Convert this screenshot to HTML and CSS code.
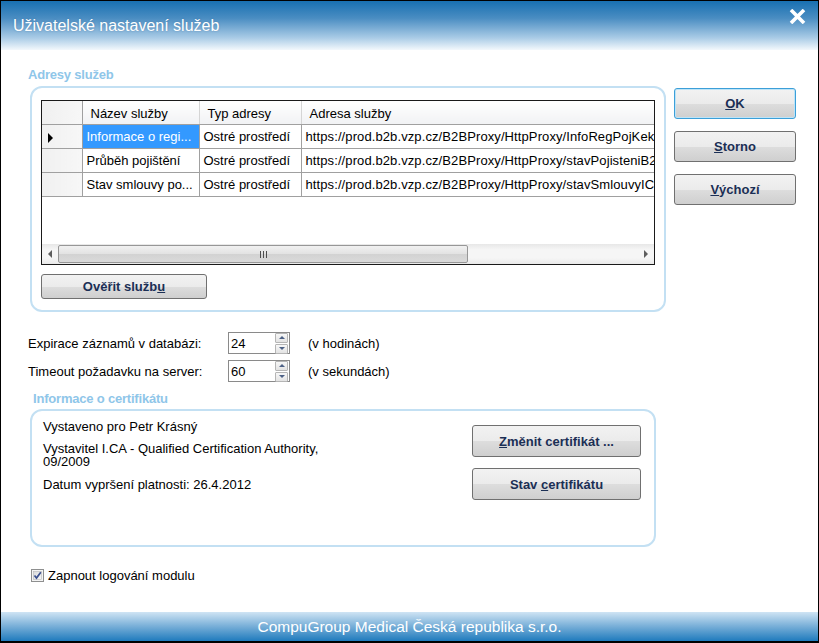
FILE: index.html
```html
<!DOCTYPE html>
<html lang="cs">
<head>
    <meta charset="UTF-8">
    <title>Uživatelské nastavení služeb</title>
    <link rel="stylesheet" href="styles.css">
</head>
<body>
    <div class="window">
        <div class="titlebar">
            <div class="title">Uživatelské nastavení služeb</div>
            <svg class="close" width="17" height="15" viewBox="0 0 17 15">
                <path d="M2 1 L15 14 M15 1 L2 14" stroke="#fff" stroke-width="3.6"/>
            </svg>
        </div>

        <div class="main">
            <div class="left">
                <div class="group-label">Adresy služeb</div>
                <div class="group group-services">
                    <div class="grid">
                        <table class="grid-table">
                            <colgroup>
                                <col style="width:40px">
                                <col style="width:117px">
                                <col style="width:102px">
                                <col>
                            </colgroup>
                            <thead>
                                <tr>
                                    <th class="rowhead"></th>
                                    <th>Název služby</th>
                                    <th>Typ adresy</th>
                                    <th>Adresa služby</th>
                                </tr>
                            </thead>
                            <tbody>
                                <tr>
                                    <td class="rowhead"><span class="current"></span></td>
                                    <td class="selected">Informace o regi...</td>
                                    <td>Ostré prostředí</td>
                                    <td class="url">https://prod.b2b.vzp.cz/B2BProxy/HttpProxy/InfoRegPojKek</td>
                                </tr>
                                <tr>
                                    <td class="rowhead"></td>
                                    <td>Průběh pojištění</td>
                                    <td>Ostré prostředí</td>
                                    <td class="url">https://prod.b2b.vzp.cz/B2BProxy/HttpProxy/stavPojisteniB2</td>
                                </tr>
                                <tr>
                                    <td class="rowhead"></td>
                                    <td>Stav smlouvy po...</td>
                                    <td>Ostré prostředí</td>
                                    <td class="url">https://prod.b2b.vzp.cz/B2BProxy/HttpProxy/stavSmlouvyIC</td>
                                </tr>
                            </tbody>
                        </table>
                        <div class="grid-fill"></div>
                        <div class="hscroll">
                            <div class="arrow arrow-left"></div>
                            <div class="thumb"><span class="grip"></span></div>
                            <div class="track"></div>
                            <div class="arrow arrow-right"></div>
                        </div>
                    </div>
                    <button class="btn btn-verify">Ověřit služb<u>u</u></button>
                </div>

                <div class="field-row first">
                    <div class="field-label">Expirace záznamů v databázi:</div>
                    <div class="spin">
                        <span class="spin-value">24</span>
                        <div class="spin-buttons">
                            <div class="spin-btn"><span class="tri-up"></span></div>
                            <div class="spin-btn"><span class="tri-down"></span></div>
                        </div>
                    </div>
                    <div class="field-unit">(v hodinách)</div>
                </div>
                <div class="field-row">
                    <div class="field-label">Timeout požadavku na server:</div>
                    <div class="spin">
                        <span class="spin-value">60</span>
                        <div class="spin-buttons">
                            <div class="spin-btn"><span class="tri-up"></span></div>
                            <div class="spin-btn"><span class="tri-down"></span></div>
                        </div>
                    </div>
                    <div class="field-unit">(v sekundách)</div>
                </div>

                <div class="group-label cert-label">Informace o certifikátu</div>
                <div class="group group-cert">
                    <div class="cert-info">
                        <p>Vystaveno pro Petr Krásný</p>
                        <p>Vystavitel I.CA - Qualified Certification Authority, 09/2009</p>
                        <p>Datum vypršení platnosti: 26.4.2012</p>
                    </div>
                    <div class="cert-buttons">
                        <button class="btn btn-cert"><u>Z</u>měnit certifikát ...</button>
                        <button class="btn btn-cert">Stav <u>c</u>ertifikátu</button>
                    </div>
                </div>

                <label class="check-row">
                    <svg class="checkbox" width="13" height="13" viewBox="0 0 13 13">
                        <defs>
                            <linearGradient id="cbg" x1="0" y1="0" x2="1" y2="1">
                                <stop offset="0" stop-color="#d9dadb"/>
                                <stop offset="1" stop-color="#f7f7f7"/>
                            </linearGradient>
                        </defs>
                        <rect x="0.5" y="0.5" width="12" height="12" fill="#f4f4f4" stroke="#8e8f8f"/>
                        <rect x="2.5" y="2.5" width="8" height="8" fill="url(#cbg)" stroke="#b7b8b9" stroke-width="0.6"/>
                        <path d="M3.5 6.5 L5.5 9 L9.8 3.2" fill="none" stroke="#3a4f8e" stroke-width="1.7"/>
                    </svg>
                    <span>Zapnout logování modulu</span>
                </label>
            </div>

            <div class="right">
                <button class="btn btn-side btn-default"><u>O</u>K</button>
                <button class="btn btn-side"><u>S</u>torno</button>
                <button class="btn btn-side"><u>V</u>ýchozí</button>
            </div>
        </div>

        <div class="footer">CompuGroup Medical Česká republika s.r.o.</div>
    </div>
</body>
</html>
```

FILE: styles.css
```css
body {
    margin: 0;
    font-family: "Liberation Sans", Arial, sans-serif;
    font-size: 13px;
    color: #000;
    background: #fff;
}
.window {
    width: 819px;
    height: 643px;
    box-sizing: border-box;
    border: 1px solid #000;
    border-bottom-width: 2px;
    display: flex;
    flex-direction: column;
    background: #fff;
}
.titlebar {
    height: 49px;
    flex: none;
    display: flex;
    justify-content: space-between;
    align-items: flex-start;
    padding: 0 12px 0 12px;
    background: linear-gradient(to bottom, #1870b1 0%, #4a8dc2 35%, #a9cbe6 75%, #f3f8fc 100%);
}
.title {
    margin-top: 16px;
    font-size: 16px;
    line-height: 18px;
    color: #fff;
    text-shadow: 0 0 2px rgba(30, 80, 130, 0.4);
}
.close {
    margin-top: 8px;
}
.main {
    flex: 1;
    display: flex;
    padding-left: 27px;
}
.left {
    width: 638px;
    display: flex;
    flex-direction: column;
}
.right {
    width: 122px;
    margin-left: 8px;
    padding-top: 38px;
    display: flex;
    flex-direction: column;
    gap: 12px;
}
.group-label {
    margin-top: 17px;
    height: 16px;
    line-height: 16px;
    font-weight: bold;
    font-size: 13px;
    color: #8fc6e9;
    letter-spacing: -0.2px;
}
.group {
    margin-left: 2px;
    box-sizing: border-box;
    border: 2px solid #c3e0f3;
    border-radius: 12px;
}
.group-services {
    margin-top: 3px;
    width: 636px;
    height: 226px;
    padding: 12px 9px 0 9px;
}
.grid {
    height: 165px;
    box-sizing: border-box;
    border: 1px solid #1a1a1a;
    display: flex;
    flex-direction: column;
    background: #fff;
    overflow: hidden;
}
.grid-table {
    width: 100%;
    table-layout: fixed;
    border-collapse: collapse;
}
.grid-table th,
.grid-table td {
    white-space: nowrap;
    overflow: hidden;
    padding: 0 0 0 4px;
    text-align: left;
    font-weight: normal;
}
.grid-table th {
    height: 22px;
    padding-left: 8px;
    padding-top: 1px;
    background: linear-gradient(to bottom, #ffffff, #f1f2f4);
    border-right: 1px solid #d5d5d5;
    border-bottom: 1px solid #a0a0a0;
}
.grid-table td {
    height: 23px;
    border: 1px solid #a0a0a0;
    border-top: none;
}
.grid-table tr > :last-child {
    border-right: none;
}
.grid-table td.url {
    letter-spacing: 0.1px;
}
.grid-table .rowhead {
    background: linear-gradient(to right, #f0f0f0, #f7f7f7);
    border-left: none;
    padding-left: 6px;
}
.grid-table th.rowhead {
    border-right: 1px solid #a0a0a0;
}
.current {
    display: inline-block;
    width: 0;
    height: 0;
    border-top: 5px solid transparent;
    border-bottom: 5px solid transparent;
    border-left: 5px solid #000;
    vertical-align: middle;
}
.grid-table td.selected {
    background: #3399ff;
    color: #fff;
}
.grid-fill {
    flex: 1;
}
.hscroll {
    height: 20px;
    display: flex;
    align-items: center;
    background: linear-gradient(to bottom, #e7e7e7, #f6f6f6 30%, #f6f6f6 70%, #e9e9e9);
}
.arrow {
    width: 16px;
    height: 20px;
    display: flex;
    align-items: center;
    justify-content: center;
}
.arrow::before {
    content: "";
    border-top: 4px solid transparent;
    border-bottom: 4px solid transparent;
}
.arrow-left::before {
    border-right: 4px solid #5e5e5e;
}
.arrow-right::before {
    border-left: 4px solid #5e5e5e;
}
.thumb {
    width: 410px;
    height: 18px;
    box-sizing: border-box;
    border: 1px solid #979797;
    border-radius: 2px;
    background: linear-gradient(to bottom, #f1f1f1, #e2e2e2 50%, #d2d2d2 51%, #dadada);
    display: flex;
    align-items: center;
    justify-content: center;
}
.grip {
    width: 7px;
    height: 7px;
    background: repeating-linear-gradient(to right, #4e4e4e 0, #4e4e4e 1px, transparent 1px, transparent 3px);
}
.track {
    flex: 1;
}
.btn {
    font-family: "Liberation Sans", Arial, sans-serif;
    font-weight: bold;
    font-size: 13px;
    color: #1b2f55;
    box-sizing: border-box;
    border: 1px solid #707070;
    border-radius: 3px;
    background: linear-gradient(to bottom, #f2f2f2 0%, #ebebeb 50%, #dddddd 51%, #cfcfcf 100%);
    padding: 0;
    cursor: pointer;
}
.btn-verify {
    margin-top: 9px;
    width: 166px;
    height: 25px;
}
.btn-side {
    height: 31px;
}
.btn-default {
    border-color: #3c9fd8;
    box-shadow: inset 0 0 0 1px #bde4f8;
}
.field-row {
    display: flex;
    align-items: center;
    height: 22px;
    margin-top: 6px;
}
.field-row.first {
    margin-top: 20px;
}
.field-label {
    width: 200px;
}
.field-unit {
    margin-left: 18px;
}
.spin {
    width: 62px;
    height: 22px;
    box-sizing: border-box;
    border: 1px solid #8a8a8a;
    display: flex;
    align-items: center;
    background: #fff;
}
.spin-value {
    flex: 1;
    padding-left: 2px;
}
.spin-buttons {
    width: 13px;
    margin-right: 1px;
    display: flex;
    flex-direction: column;
    gap: 1px;
}
.spin-btn {
    height: 8px;
    border: 1px solid #b5b5b5;
    border-radius: 1px;
    background: linear-gradient(to bottom, #f7f7f7, #e3e3e3);
    display: flex;
    align-items: center;
    justify-content: center;
}
.tri-up,
.tri-down {
    border-left: 3px solid transparent;
    border-right: 3px solid transparent;
}
.tri-up {
    border-bottom: 3px solid #4d6185;
}
.tri-down {
    border-top: 3px solid #4d6185;
}
.cert-label {
    margin-top: 9px;
    margin-left: 5px;
}
.group-cert {
    margin-top: 2px;
    width: 626px;
    height: 138px;
    padding: 9px 13px 0 11px;
    display: flex;
    justify-content: space-between;
    align-items: flex-start;
}
.cert-info {
    width: 300px;
    line-height: 13px;
}
.cert-info p {
    margin: 0 0 9px;
}
.cert-info p:last-child {
    margin-top: 10px;
}
.cert-buttons {
    margin-top: 5px;
    width: 169px;
    display: flex;
    flex-direction: column;
    gap: 11px;
}
.btn-cert {
    height: 32px;
}
.check-row {
    margin-top: 21px;
    margin-left: 3px;
    display: flex;
    align-items: center;
    gap: 4px;
}
.footer {
    height: 29px;
    flex: none;
    display: flex;
    align-items: center;
    justify-content: center;
    font-size: 15.5px;
    color: #fff;
    background: linear-gradient(to bottom, #cfe4f4 0%, #7fb3da 45%, #1f7bbd 100%);
}
```
